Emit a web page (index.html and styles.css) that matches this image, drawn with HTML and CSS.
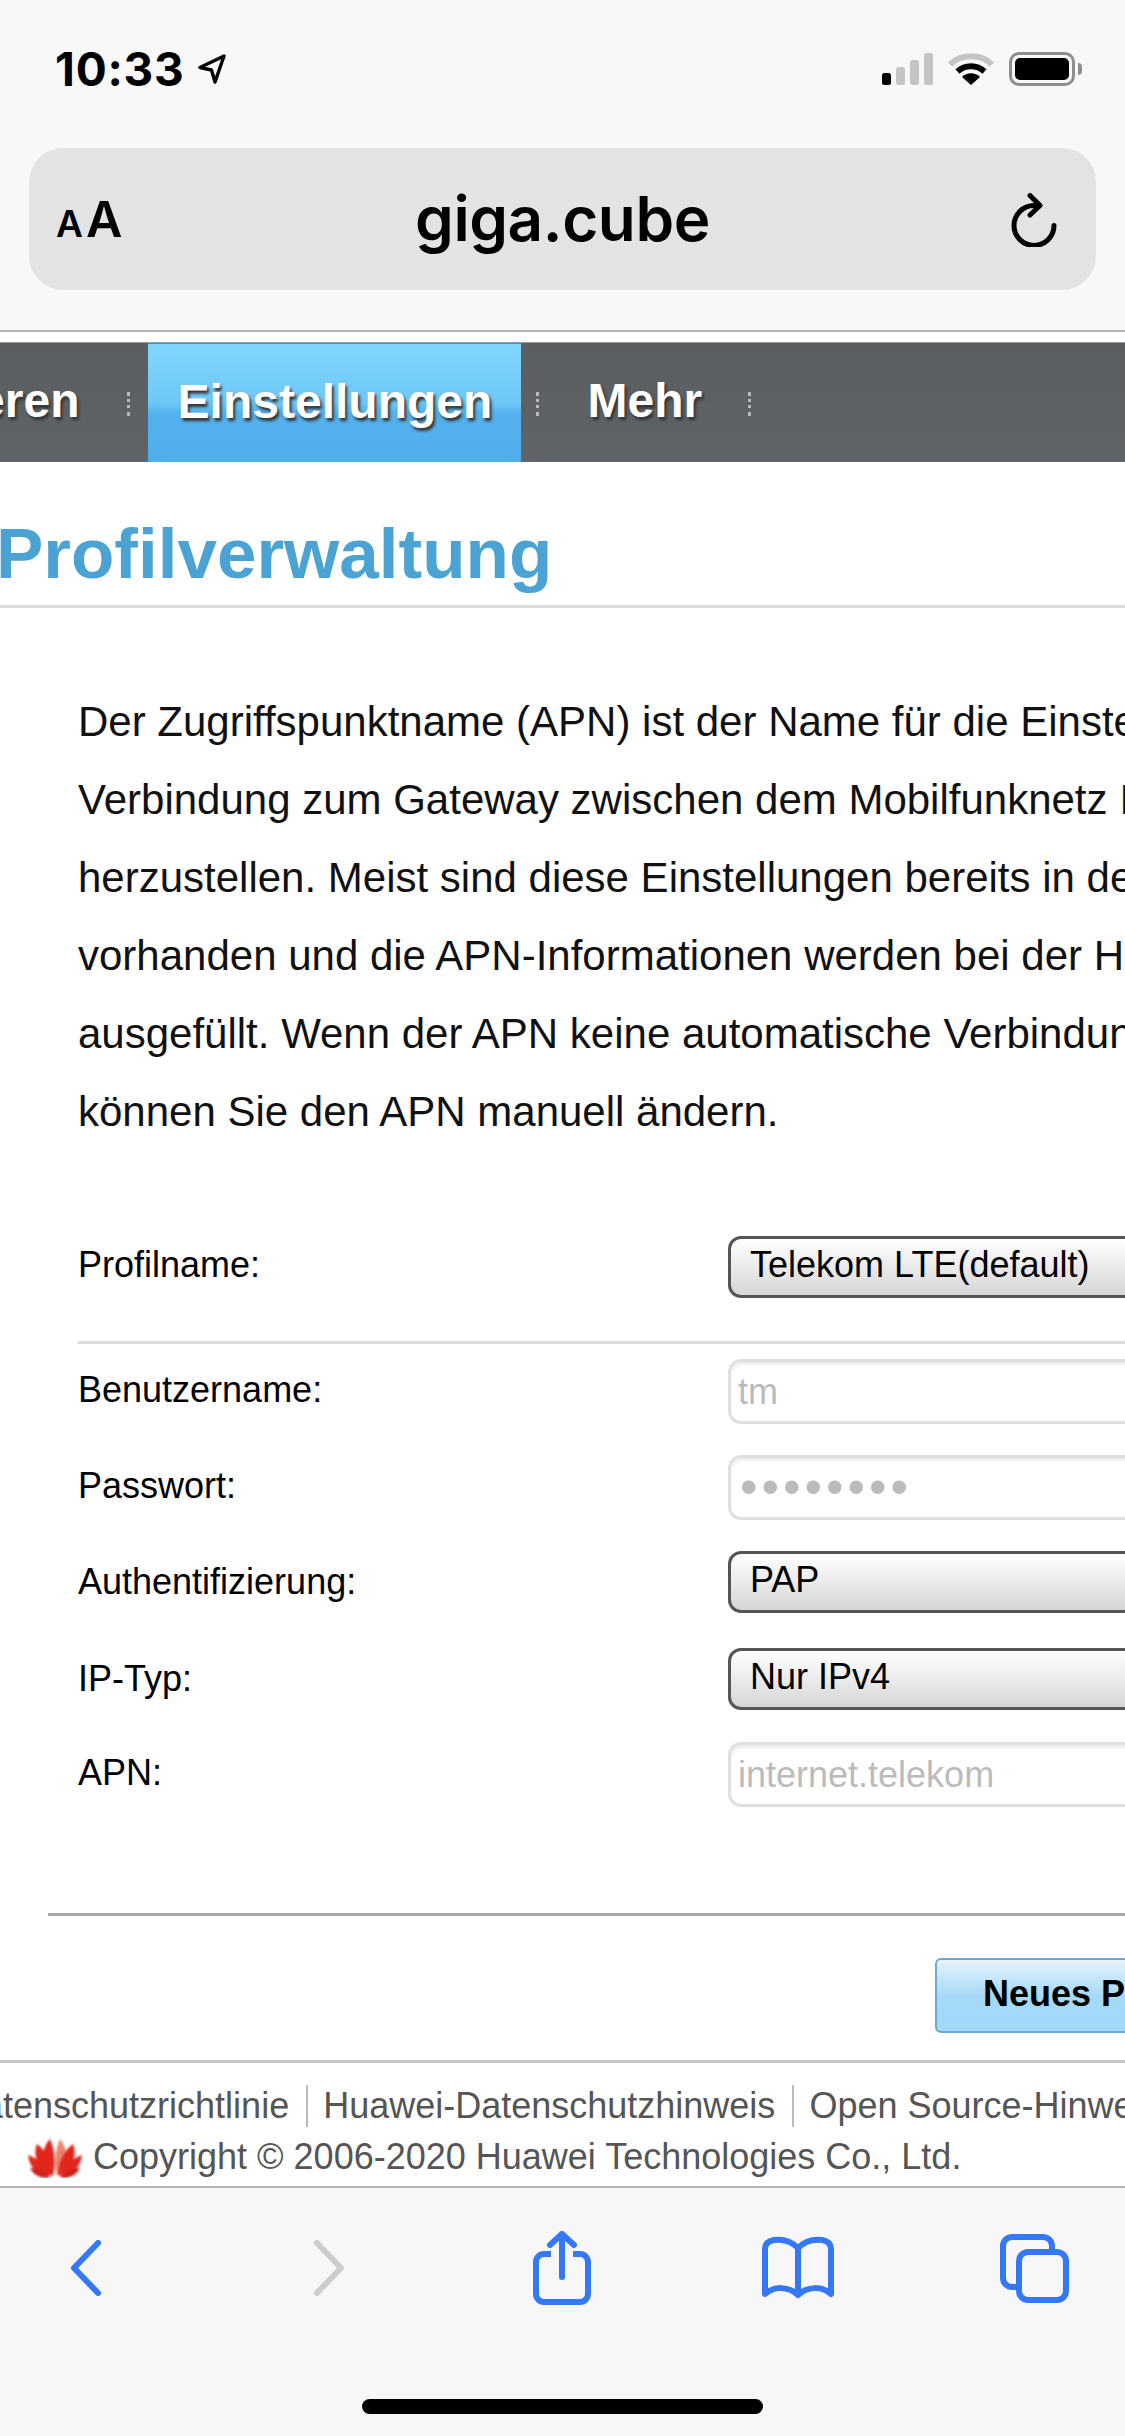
FILE: index.html
```html
<!DOCTYPE html>
<html lang="de">
<head>
  <meta charset="UTF-8" />
  <meta name="viewport" content="width=device-width, initial-scale=1.0"/>
  <title>Profilverwaltung</title>
  <link rel="stylesheet" href="styles.css">
</head>
<body>

<div class="phone">

  <!-- Statusleiste -->
  <div class="status">
    <span class="time">10:33</span>
    <svg class="locate" viewBox="0 0 28 30"><path d="M26 2 2 13.5 13.5 16 17 28Z" fill="none" stroke="#000" stroke-width="3.4" stroke-linejoin="round"/></svg>
    <div class="status-right">
      <svg class="signal" viewBox="0 0 51 32">
        <rect x="0" y="20" width="9" height="12" rx="2.5" fill="#000"/>
        <rect x="14" y="14" width="9" height="18" rx="2.5" fill="#c4c4c4"/>
        <rect x="28" y="7" width="9" height="25" rx="2.5" fill="#c4c4c4"/>
        <rect x="42" y="0" width="9" height="32" rx="2.5" fill="#c4c4c4"/>
      </svg>
      <svg class="wifi" viewBox="0 0 46 33">
        <path d="M2 12.500C13 1.500 33 1.500 44 12.500" fill="none" stroke="#c4c4c4" stroke-width="6"/>
        <path d="M9.500 19.500C17 12.500 29 12.500 36.500 19.500" fill="none" stroke="#000" stroke-width="6"/>
        <path d="M14 25C19 20 27 20 32 25L23 33Z" fill="#000"/>
      </svg>
      <div class="battery"><div class="battery-fill"></div></div>
      <div class="battery-cap"></div>
    </div>
  </div>

  <!-- Adressleiste -->
  <div class="urlbar">
    <span class="aa"><span class="aa-small">A</span><span class="aa-big">A</span></span>
    <span class="host">giga.cube</span>
    <svg class="reload" viewBox="0 0 46 54"><path d="M27 12.500H23A20 20 0 1 0 43 32.500" fill="none" stroke="#000" stroke-width="5" stroke-linecap="round"/><path d="M19 2.500 29 12.500 19 22" fill="none" stroke="#000" stroke-width="5" stroke-linecap="round" stroke-linejoin="round"/></svg>
  </div>

  <!-- Webseite -->
  <div class="page">
    <div class="nav">
      <a class="nav-item nav-first">Aktualisieren</a>
      <i class="nav-sep"></i>
      <a class="nav-item nav-active">Einstellungen</a>
      <i class="nav-sep"></i>
      <a class="nav-item nav-more">Mehr</a>
      <i class="nav-sep"></i>
    </div>

    <h1 class="title">Profilverwaltung</h1>

    <p class="intro">
      Der Zugriffspunktname (APN) ist der Name für die Einstellungen, die Ihr Gerät<br>
      Verbindung zum Gateway zwischen dem Mobilfunknetz Ihres Anbieters<br>
      herzustellen. Meist sind diese Einstellungen bereits in der SIM-Karte<br>
      vorhanden und die APN-Informationen werden bei der Herstellung<br>
      ausgefüllt. Wenn der APN keine automatische Verbindung herstellt,<br>
      können Sie den APN manuell ändern.
    </p>

    <div class="row row-profile">
      <label class="label">Profilname:</label>
      <div class="select">Telekom LTE(default)</div>
    </div>
    <div class="divider"></div>
    <div class="row row-user">
      <label class="label">Benutzername:</label>
      <div class="input">tm</div>
    </div>
    <div class="row row-pass">
      <label class="label">Passwort:</label>
      <div class="input input-dots">••••••••</div>
    </div>
    <div class="row row-auth">
      <label class="label">Authentifizierung:</label>
      <div class="select">PAP</div>
    </div>
    <div class="row row-ip">
      <label class="label">IP-Typ:</label>
      <div class="select">Nur IPv4</div>
    </div>
    <div class="row row-apn">
      <label class="label">APN:</label>
      <div class="input">internet.telekom</div>
    </div>

    <div class="form-end"></div>
    <div class="actions"><a class="btn">Neues Profil</a></div>

    <div class="footer">
      <div class="footer-links">
        <a class="footer-first">Datenschutzrichtlinie</a>
        <i class="footer-sep"></i>
        <a>Huawei-Datenschutzhinweis</a>
        <i class="footer-sep"></i>
        <a>Open Source-Hinweis</a>
      </div>
      <div class="copyright">
        <svg class="logo" viewBox="0 0 56 42">
          <defs><filter id="soft"><feGaussianBlur stdDeviation="1"/></filter></defs>
          <g filter="url(#soft)" fill="#e3281f">
            <path d="M26 40C15 28 13 14 23 3 28 14 29 28 26 40Z"/>
            <path d="M30 40C41 28 42 14 33 3 28 14 27 28 30 40Z" fill="#e9856c"/>
            <path d="M25 40C12 34 5 20 10 8 20 15 26 28 25 40Z"/>
            <path d="M31 40C44 34 51 20 46 8 36 15 30 28 31 40Z"/>
            <path d="M23 41C11 39 2 31 1 19 12 23 21 31 23 41Z"/>
            <path d="M33 41C45 39 54 31 55 19 44 23 35 31 33 41Z"/>
            <path d="M22 42C14 42 7 40 3 32 11 32 18 37 22 42Z" fill="#c9241c"/>
            <path d="M34 42C42 42 49 40 53 32 45 32 38 37 34 42Z" fill="#c9241c"/>
          </g>
        </svg>
        <span>Copyright © 2006-2020 Huawei Technologies Co., Ltd.</span>
      </div>
    </div>
  </div>

  <!-- Safari Werkzeugleiste -->
  <div class="toolbar">
    <div class="tools">
      <svg class="tool tool-back" viewBox="0 0 32 56"><path d="M28 3 4 28 28 53" fill="none" stroke="#3478f6" stroke-width="6" stroke-linecap="round" stroke-linejoin="round"/></svg>
      <svg class="tool tool-fwd" viewBox="0 0 32 56"><path d="M4 3 28 28 4 53" fill="none" stroke="#cdcdcd" stroke-width="6" stroke-linecap="round" stroke-linejoin="round"/></svg>
      <svg class="tool tool-share" viewBox="0 0 58 74"><path d="M18 23H11A8 8 0 0 0 3 31V63A8 8 0 0 0 11 71H47A8 8 0 0 0 55 63V31A8 8 0 0 0 47 23H40" fill="none" stroke="#3478f6" stroke-width="6"/><path d="M29 46V3M17 14 29 3 41 14" fill="none" stroke="#3478f6" stroke-width="6" stroke-linecap="round" stroke-linejoin="round"/></svg>
      <svg class="tool tool-book" viewBox="0 0 72 64"><path d="M36 12C29 5 20 3 12 4 6 5 3 8 3 13V58C12 50 26 50 36 59 46 50 60 50 69 58V13C69 8 66 5 60 4 52 3 43 5 36 12ZM36 12V59" fill="none" stroke="#3478f6" stroke-width="6" stroke-linejoin="round"/></svg>
      <svg class="tool tool-tabs" viewBox="0 0 69 69"><path d="M52 15V12A9 9 0 0 0 43 3H12A9 9 0 0 0 3 12V44A9 9 0 0 0 12 53H16" fill="none" stroke="#3478f6" stroke-width="6"/><rect x="19" y="18" width="47" height="48" rx="9" fill="none" stroke="#3478f6" stroke-width="6"/></svg>
    </div>
    <div class="home"></div>
  </div>

</div>

</body>
</html>
```

FILE: styles.css
```css
* {
  box-sizing: border-box;
}

html, body {
  margin: 0;
  padding: 0;
  background-color: #fff;
}

.phone {
  width: 1125px;
  height: 2436px;
  overflow: hidden;
  display: flex;
  flex-direction: column;
  font-family: "Liberation Sans", Arial, sans-serif;
}

/* Statusleiste */
.status {
  height: 148px;
  flex: none;
  background-color: #f8f8f8;
  display: flex;
  align-items: flex-start;
  padding: 46px 43px 0 55px;
}

.time {
  font-family: Inter, sans-serif;
  font-weight: 700;
  font-size: 46px;
  line-height: 46px;
  letter-spacing: 0.8px;
  color: #000;
}

.locate {
  width: 28px;
  height: 30px;
  margin: 8px 0 0 13px;
}

.status-right {
  margin-left: auto;
  display: flex;
  align-items: flex-start;
  padding-top: 6px;
}

.signal {
  width: 51px;
  height: 32px;
  margin-top: 1px;
}

.wifi {
  width: 46px;
  height: 33px;
  margin-left: 15px;
}

.battery {
  width: 66px;
  height: 34px;
  margin-left: 15px;
  border: 3px solid #8e8e8e;
  border-radius: 10px;
  padding: 3px;
}

.battery-fill {
  width: 100%;
  height: 100%;
  background-color: #000;
  border-radius: 5px;
}

.battery-cap {
  width: 4px;
  height: 12px;
  margin: 11px 0 0 3px;
  background-color: #8e8e8e;
  border-radius: 0 4px 4px 0;
}

/* Adressleiste */
.urlbar {
  height: 184px;
  flex: none;
  background-color: #f8f8f8;
  border-bottom: 2px solid #b2b2b2;
  padding-left: 29px;
  padding-right: 29px;
  position: relative;
}

.urlbar::before {
  content: "";
  display: block;
  height: 142px;
  background-color: #e3e3e3;
  border-radius: 34px;
}

.aa {
  position: absolute;
  left: 56px;
  top: 46px;
  font-family: Inter, sans-serif;
  font-weight: 600;
  line-height: 50px;
  color: #000;
}

.aa-small {
  font-size: 37px;
  margin-right: 3px;
}

.aa-big {
  font-size: 50px;
}

.host {
  position: absolute;
  left: 0;
  right: 0;
  top: 32px;
  text-align: center;
  font-family: Inter, sans-serif;
  font-weight: 600;
  font-size: 62px;
  line-height: 78px;
  letter-spacing: -0.4px;
  color: #000;
}

.reload {
  position: absolute;
  left: 1011px;
  top: 45px;
  width: 46px;
  height: 54px;
}

/* Webseite */
.page {
  height: 1854px;
  flex: none;
  background-color: #fff;
  overflow: hidden;
}

.nav {
  margin-top: 10px;
  height: 120px;
  background: linear-gradient(#585e61, #5f6567);
  display: flex;
  align-items: stretch;
  white-space: nowrap;
  border-top: 1px solid #9a9a9a;
}

.nav-item {
  display: flex;
  align-items: center;
  flex: none;
  font-weight: 700;
  font-size: 48px;
  color: #fff;
  text-shadow: 2px 3px 3px #333;
  padding-bottom: 4px;
}

.nav-first {
  margin-left: -222px;
  margin-right: 48px;
}

.nav-sep {
  flex: none;
  width: 3px;
  height: 24px;
  align-self: center;
  margin-top: 2px;
  border-left: 3px dotted #b9b9b9;
}

.nav-active {
  width: 373px;
  margin-left: 18px;
  justify-content: center;
  background: linear-gradient(#7fd6fd 0, #6fc7f7 50%, #55b2ee 58%, #4fadec 100%);
  border-top: 1px solid #4b8fba;
}

.nav-more {
  margin: 0 46px 0 48px;
}

.nav-active + .nav-sep {
  margin-left: 15px;
}

.title {
  margin: 0;
  height: 146px;
  padding-top: 52px;
  border-bottom: 3px solid #dcdcdc;
  font-size: 71px;
  line-height: 80px;
  font-weight: 700;
  color: #4ba3d3;
  white-space: nowrap;
  text-indent: -4px;
}

.intro {
  margin: 75px 0 0 78px;
  height: 468px;
  font-size: 42px;
  line-height: 78px;
  color: #111;
  white-space: nowrap;
}

.row {
  display: flex;
  align-items: center;
  padding-left: 78px;
  white-space: nowrap;
}

.label {
  width: 650px;
  flex: none;
  font-size: 36px;
  color: #000;
  padding-bottom: 4px;
}

.row-auth .label, .row-ip .label {
  padding-bottom: 0;
}

.select {
  width: 500px;
  flex: none;
  height: 62px;
  padding: 0 19px;
  border: 3px solid #555;
  border-radius: 13px;
  background: linear-gradient(#fff, #d6d6d6);
  font-size: 36px;
  line-height: 52px;
  color: #000;
}

.input {
  width: 500px;
  flex: none;
  height: 65px;
  padding: 0 7px;
  border: 3px solid #e0e0e0;
  border-radius: 13px;
  box-shadow: inset 0 3px 3px #ececec;
  background-color: #fff;
  font-size: 36px;
  line-height: 59px;
  color: #bbb;
}

.input-dots {
  font-size: 50px;
  letter-spacing: 4px;
  padding-left: 9px;
}

.row-profile {
  margin-top: 85px;
}

.divider {
  margin: 43px 0 0 78px;
  height: 3px;
  background-color: #dcdcdc;
}

.row-user {
  margin-top: 15px;
}

.row-pass {
  margin-top: 31px;
}

.row-auth {
  margin-top: 31px;
}

.row-ip {
  margin-top: 35px;
}

.row-apn {
  margin-top: 32px;
}

.form-end {
  margin: 106px 0 0 48px;
  height: 3px;
  background-color: #a8a8a8;
}

.actions {
  margin-top: 42px;
  padding-left: 935px;
  white-space: nowrap;
}

.btn {
  display: block;
  width: 300px;
  height: 75px;
  padding-left: 46px;
  border: 2px solid #6fa8d0;
  border-radius: 6px;
  background: linear-gradient(#e6f3fb, #a5d9f8 52%, #a3d8f8);
  font-weight: 700;
  font-size: 36px;
  line-height: 68px;
  color: #000;
}

.footer {
  margin-top: 27px;
  border-top: 3px solid #c6c6c6;
  color: #555;
  font-size: 36px;
  white-space: nowrap;
}

.footer-links {
  display: flex;
  align-items: center;
  height: 64px;
  margin-top: 11px;
}

.footer-links a {
  flex: none;
}

.footer-links .footer-first {
  margin-left: -43px;
}

.footer-sep {
  flex: none;
  width: 2px;
  height: 42px;
  margin: 0 15px 0 17px;
  background-color: #bbb;
}

.copyright {
  display: flex;
  align-items: center;
  height: 46px;
  padding-left: 27px;
  margin-top: -4px;
}

.logo {
  width: 56px;
  height: 42px;
  margin-right: 10px;
  flex: none;
}

/* Safari Werkzeugleiste */
.toolbar {
  height: 250px;
  flex: none;
  background-color: #f7f7f8;
  border-top: 2px solid #b2b2b2;
}

.tools {
  display: flex;
  align-items: center;
  height: 122px;
  margin-top: 19px;
  padding-left: 70px;
}

.tool {
  flex: none;
}

.tool-back, .tool-fwd {
  width: 32px;
  height: 56px;
}

.tool-fwd {
  margin-left: 211px;
}

.tool-share {
  width: 58px;
  height: 74px;
  margin-left: 188px;
}

.tool-book {
  width: 72px;
  height: 64px;
  margin-left: 171px;
}

.tool-tabs {
  width: 69px;
  height: 69px;
  margin-left: 166px;
}

.home {
  width: 401px;
  height: 15px;
  margin: 70px 0 0 362px;
  background-color: #000;
  border-radius: 8px;
}
```
